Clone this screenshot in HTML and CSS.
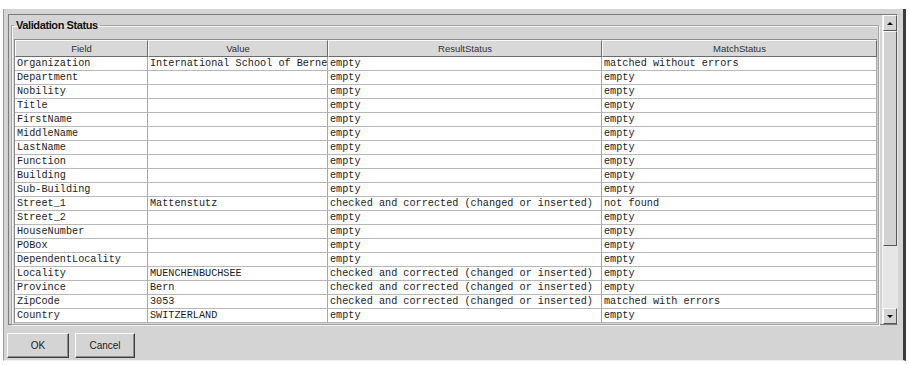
FILE: index.html
```html
<!DOCTYPE html>
<html>
<head>
  <title>Validation Status</title>
  <meta charset="utf-8">
  <link rel="stylesheet" href="styles.css">
</head>
<body>
  <div class="window">
    <div class="pane">
      <div class="content">
        <fieldset class="group">
          <legend>Validation Status</legend>
          <table class="grid">
            <colgroup>
              <col style="width: 133px">
              <col style="width: 180px">
              <col style="width: 274px">
              <col style="width: 275px">
            </colgroup>
            <thead>
              <tr><th>Field</th><th>Value</th><th>ResultStatus</th><th>MatchStatus</th></tr>
            </thead>
            <tbody>
              <tr><td>Organization</td><td>International School of Berne</td><td>empty</td><td>matched without errors</td></tr>
              <tr><td>Department</td><td></td><td>empty</td><td>empty</td></tr>
              <tr><td>Nobility</td><td></td><td>empty</td><td>empty</td></tr>
              <tr><td>Title</td><td></td><td>empty</td><td>empty</td></tr>
              <tr><td>FirstName</td><td></td><td>empty</td><td>empty</td></tr>
              <tr><td>MiddleName</td><td></td><td>empty</td><td>empty</td></tr>
              <tr><td>LastName</td><td></td><td>empty</td><td>empty</td></tr>
              <tr><td>Function</td><td></td><td>empty</td><td>empty</td></tr>
              <tr><td>Building</td><td></td><td>empty</td><td>empty</td></tr>
              <tr><td>Sub-Building</td><td></td><td>empty</td><td>empty</td></tr>
              <tr><td>Street_1</td><td>Mattenstutz</td><td>checked and corrected (changed or inserted)</td><td>not found</td></tr>
              <tr><td>Street_2</td><td></td><td>empty</td><td>empty</td></tr>
              <tr><td>HouseNumber</td><td></td><td>empty</td><td>empty</td></tr>
              <tr><td>POBox</td><td></td><td>empty</td><td>empty</td></tr>
              <tr><td>DependentLocality</td><td></td><td>empty</td><td>empty</td></tr>
              <tr><td>Locality</td><td>MUENCHENBUCHSEE</td><td>checked and corrected (changed or inserted)</td><td>empty</td></tr>
              <tr><td>Province</td><td>Bern</td><td>checked and corrected (changed or inserted)</td><td>empty</td></tr>
              <tr><td>ZipCode</td><td>3053</td><td>checked and corrected (changed or inserted)</td><td>matched with errors</td></tr>
              <tr><td>Country</td><td>SWITZERLAND</td><td>empty</td><td>empty</td></tr>
            </tbody>
          </table>
        </fieldset>
      </div>
      <div class="scrollbar">
        <div class="arrow"><span class="tri up"></span></div>
        <div class="thumb"></div>
        <div class="track"></div>
        <div class="arrow"><span class="tri down"></span></div>
      </div>
    </div>
    <div class="buttons">
      <button class="button ok">OK</button>
      <button class="button cancel">Cancel</button>
    </div>
  </div>
</body>
</html>
```

FILE: styles.css
```css
body {
  margin: 0;
  background: #fff;
  font-family: "Liberation Sans", Arial, sans-serif;
}
.window {
  box-sizing: border-box;
  width: 903px;
  height: 352px;
  margin: 9px 0 0 3px;
  background: #d4d4d4;
  border-left: 1px solid #9c9c9c;
  border-right: 3px solid #3c3c3c;
  border-bottom: 1px solid #f0f0f0;
  display: flex;
  flex-direction: column;
}
.pane {
  height: 311px;
  box-sizing: border-box;
  margin: 5px 5px 0 4px;
  border: 1px solid #7c7c7c;
  border-right-color: #e8e8e8;
  display: flex;
}
.content {
  flex: 1;
  padding: 4px 3px 0 2px;
}
.group {
  margin: 0;
  padding: 7px 1px 1px 2px;
  border: 1px solid #a4a4a4;
  box-shadow: 1px 1px 0 #f4f4f4, inset 1px 1px 0 #f4f4f4;
}
.group legend {
  padding: 0 2px;
  font-size: 11px;
  line-height: 13px;
  font-weight: bold;
  letter-spacing: -0.4px;
  color: #111;
}
.grid {
  table-layout: fixed;
  width: 862px;
  border-collapse: separate;
  border-spacing: 0;
  border-left: 1px solid #8c8c8c;
  border-top: 1px solid #8c8c8c;
}
.grid th {
  height: 15px;
  padding: 0;
  background: #d8d8d8;
  border-top: 1px solid #fafafa;
  border-left: 1px solid #fafafa;
  border-right: 1px solid #6c6c6c;
  border-bottom: 1px solid #6c6c6c;
  font-weight: normal;
  font-size: 9.5px;
  color: #333;
  text-align: center;
}
.grid tbody tr {
  height: 14px;
}
.grid td {
  padding: 0 0 0 2px;
  background: #fff;
  border-right: 1px solid #a8a8a8;
  border-bottom: 1px solid #b8b8b8;
  font-family: "Liberation Mono", "Courier New", monospace;
  font-size: 10.2px;
  line-height: 13px;
  color: #1c1c1c;
  white-space: nowrap;
  overflow: hidden;
}
.scrollbar {
  width: 15px;
  display: flex;
  flex-direction: column;
  background: #e4e4e4;
  border-left: 1px solid #f4f4f4;
}
.arrow {
  height: 16px;
  box-sizing: border-box;
  background: #d4d4d4;
  border-top: 1px solid #fafafa;
  border-left: 1px solid #fafafa;
  border-right: 1px solid #555;
  border-bottom: 1px solid #555;
  display: flex;
  align-items: center;
  justify-content: center;
}
.tri {
  width: 0;
  height: 0;
  border-left: 3px solid transparent;
  border-right: 3px solid transparent;
}
.tri.up {
  border-bottom: 3px solid #111;
}
.tri.down {
  border-top: 3px solid #111;
}
.thumb {
  height: 215px;
  box-sizing: border-box;
  background: #d2d2d2;
  border-top: 1px solid #fafafa;
  border-left: 1px solid #fafafa;
  border-right: 1px solid #555;
  border-bottom: 1px solid #555;
}
.track {
  flex: 1;
  background: #e6e6e6;
}
.buttons {
  display: flex;
  gap: 6px;
  padding: 8px 0 0 3px;
}
.button {
  height: 25px;
  box-sizing: border-box;
  background: #d4d4d4;
  border: 1px solid;
  border-color: #fafafa #404040 #404040 #fafafa;
  box-shadow: inset -1px -1px 0 #8c8c8c;
  font-family: "Liberation Sans", Arial, sans-serif;
  font-size: 10px;
  color: #222;
  padding: 0;
}
.ok {
  width: 62px;
}
.cancel {
  width: 60px;
}
```
